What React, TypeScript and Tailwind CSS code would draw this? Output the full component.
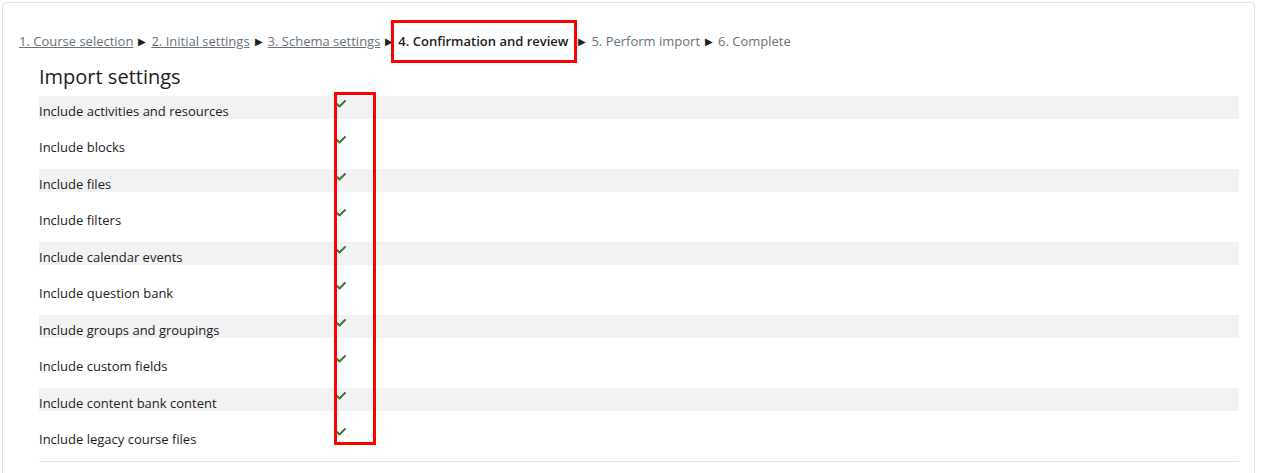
import { Check } from 'lucide-react'

const STEPS = ['1. Course selection', '2. Initial settings', '3. Schema settings']

const SETTINGS = [
  'Include activities and resources',
  'Include blocks',
  'Include files',
  'Include filters',
  'Include calendar events',
  'Include question bank',
  'Include groups and groupings',
  'Include custom fields',
  'Include content bank content',
  'Include legacy course files'
]

export default function App() {
  return (
    <div className="h-[473px] bg-white pl-[2px] pr-[6px] pt-[2px] text-[#1d2125]" style={{ fontFamily: '"Open Sans", "Liberation Sans", sans-serif' }}>
      <div className="h-[480px] rounded-sm border border-[#dee2e6] bg-white">
        <div className="flex items-center pl-[16px] pt-[29px] text-[13px] text-[#6a737b]">
          {STEPS.map((s) => (
            <span key={s} className="flex items-center">
              <span className="underline">{s}</span>
              <span className="mx-[5px] text-[10px] text-[#1d2125]">▶</span>
            </span>
          ))}
          <span className="relative font-semibold text-[#1d2125]">
            4. Confirmation and review
            <span className="absolute -left-[7px] -right-[9px] -top-[12px] -bottom-[11px] border-[3px] border-[#ff0000]" />
          </span>
          <span className="mx-[5px] ml-[10px] text-[10px] text-[#1d2125]">▶</span>
          <span>5. Perform import</span>
          <span className="mx-[5px] text-[10px] text-[#1d2125]">▶</span>
          <span>6. Complete</span>
        </div>
        <div className="relative ml-[36px] mr-[15px]">
          <h3 className="mt-[11px] h-[33px] text-[20px] leading-[28px]">Import settings</h3>
          <div className="border-b border-[#dee2e6] pb-[14px]">
            {SETTINGS.map((s, i) => (
              <div key={s} className={`h-[23px] ${i < SETTINGS.length - 1 ? 'mb-[13.5px]' : ''} flex ${i % 2 === 0 ? 'bg-[#f2f2f2]' : ''}`}>
                <div className="w-[296px] pt-[6px] text-[13px] leading-[18px]">{s}</div>
                <Check className="mt-[2px] h-[12px] w-[12px] text-[#357a32]" strokeWidth={4} />
              </div>
            ))}
          </div>
          <div className="absolute left-[295px] top-[29px] h-[353px] w-[42px] border-[3px] border-[#ff0000]" />
        </div>
      </div>
    </div>
  )
}
